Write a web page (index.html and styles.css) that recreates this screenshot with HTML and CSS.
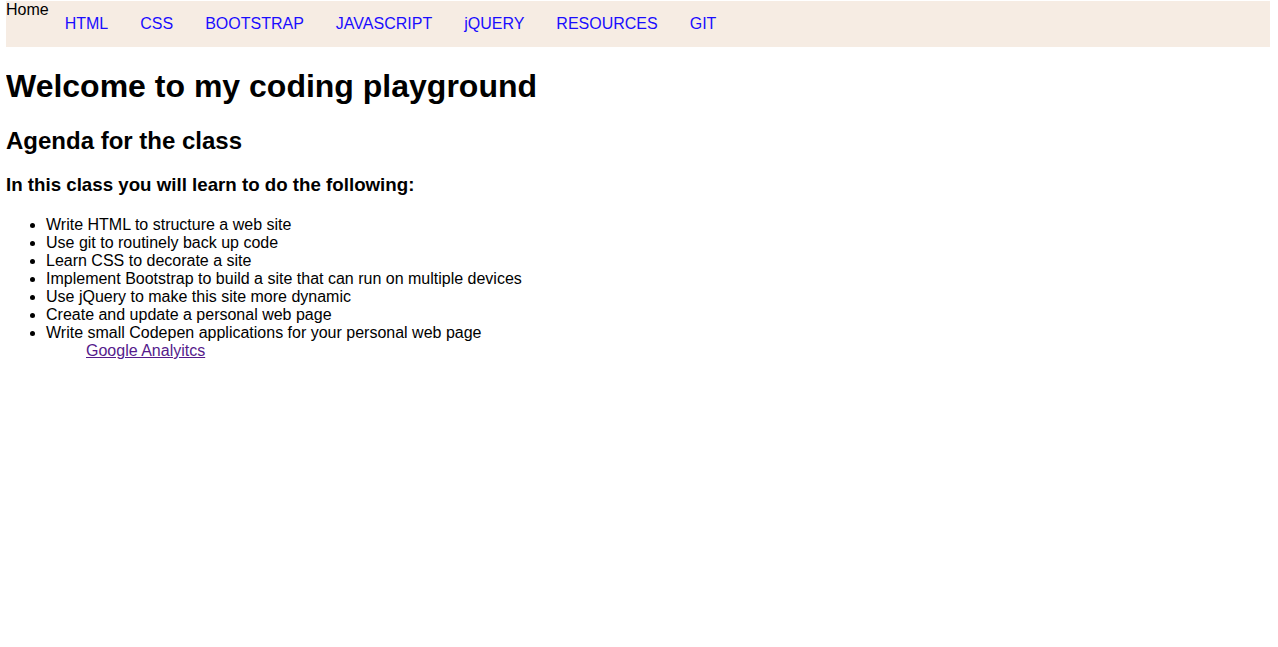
FILE: index.html
```html
<!DOCTYPE html>
<html>
<head>
<meta charset="utf-8">
<link rel="stylesheet" href="styles.css">
</head>
<body>
<nav class="topnav">
  <span class="home">Home</span>
  <ul class="nav-links">
    <li><a href="#">HTML</a></li>
    <li><a href="#">CSS</a></li>
    <li><a href="#">BOOTSTRAP</a></li>
    <li><a href="#">JAVASCRIPT</a></li>
    <li><a href="#">jQUERY</a></li>
    <li><a href="#">RESOURCES</a></li>
    <li><a href="#">GIT</a></li>
  </ul>
</nav>
<main class="content">
  <h1>Welcome to my coding playground</h1>
  <h2>Agenda for the class</h2>
  <h3>In this class you will learn to do the following:</h3>
  <ul class="agenda">
    <li>Write HTML to structure a web site</li>
    <li>Use git to routinely back up code</li>
    <li>Learn CSS to decorate a site</li>
    <li>Implement Bootstrap to build a site that can run on multiple devices</li>
    <li>Use jQuery to make this site more dynamic</li>
    <li>Create and update a personal web page</li>
    <li>Write small Codepen applications for your personal web page</li>
  </ul>
  <a class="analytics" href="#">Google Analyitcs</a>
</main>
</body>
</html>
```

FILE: styles.css
```css
body {
  margin: 1px 8px 0 6px;
  font-family: "Liberation Sans", Arial, sans-serif;
  font-size: 16px;
  line-height: 18px;
  color: #000;
  background: #fff;
}

.topnav {
  display: flex;
  align-items: flex-start;
  height: 46px;
  background: #f6ece3;
}

.home {
  display: block;
  line-height: 18px;
}

.nav-links {
  display: flex;
  list-style: none;
  margin: 0;
  padding: 14px 0 0 0;
}

.nav-links a {
  display: block;
  padding: 0 16px;
  color: #1a0dff;
  text-decoration: none;
}

.content h1 {
  font-size: 32px;
  line-height: 37px;
  margin: 21px 0 22px;
}

.content h2 {
  font-size: 24px;
  line-height: 28px;
  margin: 19px 0;
}

.content h3 {
  font-size: 18.72px;
  line-height: 22px;
  margin: 18px 0 20px;
}

.agenda {
  margin: 20px 0 0 0;
  padding-left: 40px;
}

.analytics {
  display: inline-block;
  margin-left: 80px;
  color: #551a8b;
}
```
